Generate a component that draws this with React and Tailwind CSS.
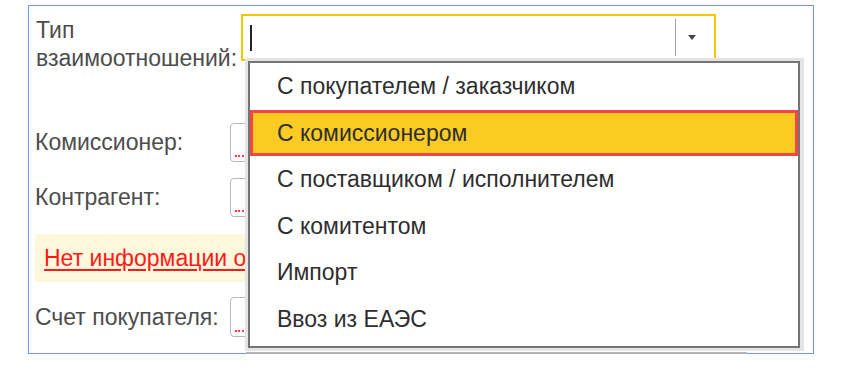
const items = [
  'С покупателем / заказчиком',
  'С комиссионером',
  'С поставщиком / исполнителем',
  'С комитентом',
  'Импорт',
  'Ввоз из ЕАЭС',
]

function SmallInput() {
  return (
    <div className="relative w-[40px] h-full rounded-[4px] border border-[#b8b8b8] bg-white">
      <div className="absolute left-[4px] bottom-[4px] w-[12px] border-b-2 border-dotted border-[#ff3b3b]" />
    </div>
  )
}

export default function App() {
  return (
    <div className="w-[848px] h-[372px] bg-white pt-[5px] pl-[28px] text-[23px] text-[#4d4d4d]"
      style={{ fontFamily: '"Liberation Sans", Arial, sans-serif' }}>
      <div className="relative w-[786px] h-[349px] border border-[#6f9bd8] flex flex-col">
        {/* Тип взаимоотношений */}
        <div className="flex items-start h-[66px] pt-[8px]">
          <div className="w-[212px] pl-[7px] mt-[2px] leading-[28px]">
            Тип<br />взаимоотношений:
          </div>
          <div className="relative flex items-center w-[475px] h-[47px] border-2 border-[#f6c700] bg-white">
            <div className="ml-[7px] w-[2px] h-[26px] bg-[#222]" />
            <div className="flex-1" />
            <div className="w-px h-[37px] bg-[#a3a3a3]" />
            <div className="w-[38px] flex justify-center">
              <div className="w-0 h-0 border-l-[4px] border-r-[4px] border-t-[5px] border-l-transparent border-r-transparent border-t-[#444] ml-[-6px]" />
            </div>
          </div>
        </div>

        {/* Комиссионер */}
        <div className="flex items-center h-[39px] mt-[51px]">
          <div className="w-[201px] pl-[6px]">Комиссионер:</div>
          <SmallInput />
        </div>

        {/* Контрагент */}
        <div className="flex items-center h-[39px] mt-[16px]">
          <div className="w-[201px] pl-[6px]">Контрагент:</div>
          <SmallInput />
        </div>

        {/* info banner */}
        <div className="ml-[6px] mt-[17px] w-[710px] h-[48px] bg-[#fdf8dc] flex items-center pl-[9px] overflow-hidden whitespace-nowrap">
          <span className="text-[#ff1a1a] underline underline-offset-[3px] pr-[40px]">Нет информации о</span>
        </div>

        {/* Счет покупателя */}
        <div className="flex items-center h-[40px] mt-[15px]">
          <div className="w-[201px] pl-[6px]">Счет покупателя:</div>
          <SmallInput />
        </div>

        <div className="absolute left-[217px] bottom-[-1px] w-[501px] h-[2px] bg-[#b4b4b4]" />

        {/* dropdown list */}
        <div className="absolute left-[216px] top-[52px] w-[559px] h-[293px] bg-[#e4e4e4] p-[3px] pr-[4px]">
          <div className="h-full border-2 border-[#747474] bg-white pb-[4px] text-[#2e2e2e]">
            {items.map((t, i) => (
              <div key={t}
                className={i === 1
                  ? 'h-[46.5px] flex items-center pl-[24px] bg-[#fbcb24] border-[3px] border-[#f24646]'
                  : 'h-[46.5px] flex items-center pl-[27px]'}>
                {t}
              </div>
            ))}
          </div>
        </div>
      </div>
    </div>
  )
}
